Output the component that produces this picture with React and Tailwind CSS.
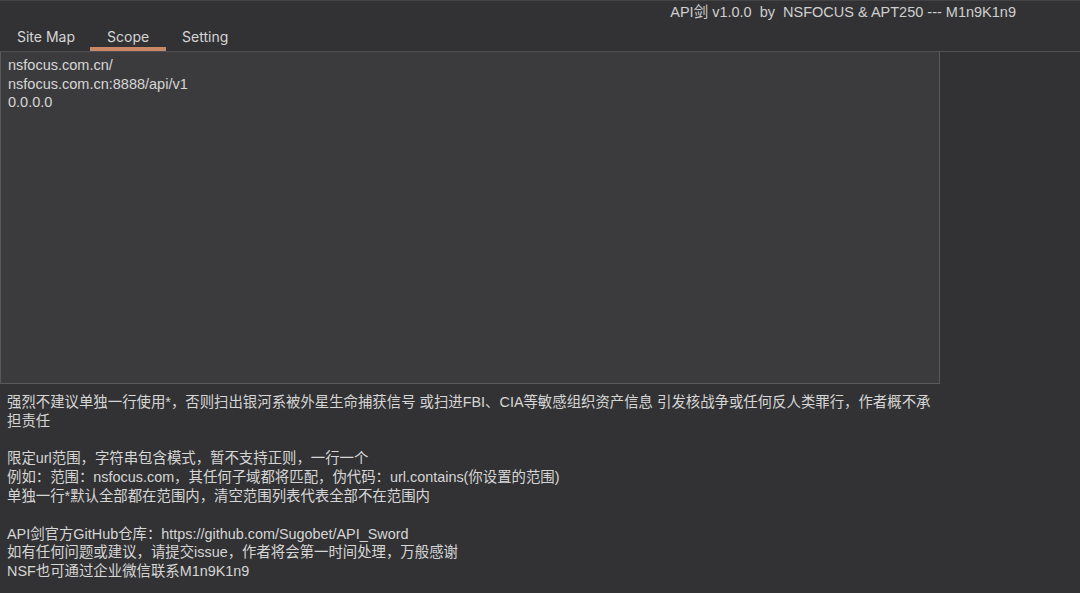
import React from "react";

const font = { fontFamily: 'Inter, "Noto Sans CJK SC", sans-serif' };
const body = { fontFamily: '"Liberation Sans", "Noto Sans CJK SC", sans-serif' };

export default function App() {
  const scope = ["nsfocus.com.cn/", "nsfocus.com.cn:8888/api/v1", "0.0.0.0"];
  const notes = [
    "强烈不建议单独一行使用*，否则扫出银河系被外星生命捕获信号 或扫进FBI、CIA等敏感组织资产信息 引发核战争或任何反人类罪行，作者概不承\n担责任",
    "",
    "限定url范围，字符串包含模式，暂不支持正则，一行一个",
    "例如：范围：nsfocus.com，其任何子域都将匹配，伪代码：url.contains(你设置的范围)",
    "单独一行*默认全部都在范围内，清空范围列表代表全部不在范围内",
    "",
    "API剑官方GitHub仓库：https://github.com/Sugobet/API_Sword",
    "如有任何问题或建议，请提交issue，作者将会第一时间处理，万般感谢",
    "NSF也可通过企业微信联系M1n9K1n9",
  ];
  return (
    <div className="w-[1080px] h-[593px] bg-[#323234] text-[#d6d6d6] overflow-hidden" style={font}>
      <div className="h-[24px] flex items-center justify-end pr-[64px] border-t border-[#444446]">
        <span className="text-[14.5px] whitespace-pre text-[#cfcfcf]" style={body}>API剑 v1.0.0  by  NSFOCUS &amp; APT250 --- M1n9K1n9</span>
      </div>
      <div className="h-[28px] flex items-stretch border-b border-[#505052] pl-[2px]">
        {["Site Map", "Scope", "Setting"].map((t, i) => (
          <div
            key={t}
            className={
              "flex items-center text-[14px] pt-[2px] border-b-[4px] " +
              (i === 0 ? "px-[15px] " : i === 1 ? "px-[17px] " : "px-[16px] ") +
              (i === 1 ? "border-[#c88767]" : "border-transparent")
            }
          >
            {t}
          </div>
        ))}
      </div>
      <div className="w-[940px] h-[332px] bg-[#3b3b3d] border border-t-0 border-[#59595b] pt-[4px] pl-[7px] text-[14.5px] leading-[18.5px]" style={body}>
        {scope.map((s) => (
          <div key={s}>{s}</div>
        ))}
      </div>
      <div className="w-[960px] pl-[7px] pr-[10px] pt-[9px] text-[14.4px] leading-[18.8px]" style={body}>
        {notes.map((n, i) => (
          <div key={i} className="min-h-[18.8px] whitespace-pre-line">
            {n}
          </div>
        ))}
      </div>
    </div>
  );
}
